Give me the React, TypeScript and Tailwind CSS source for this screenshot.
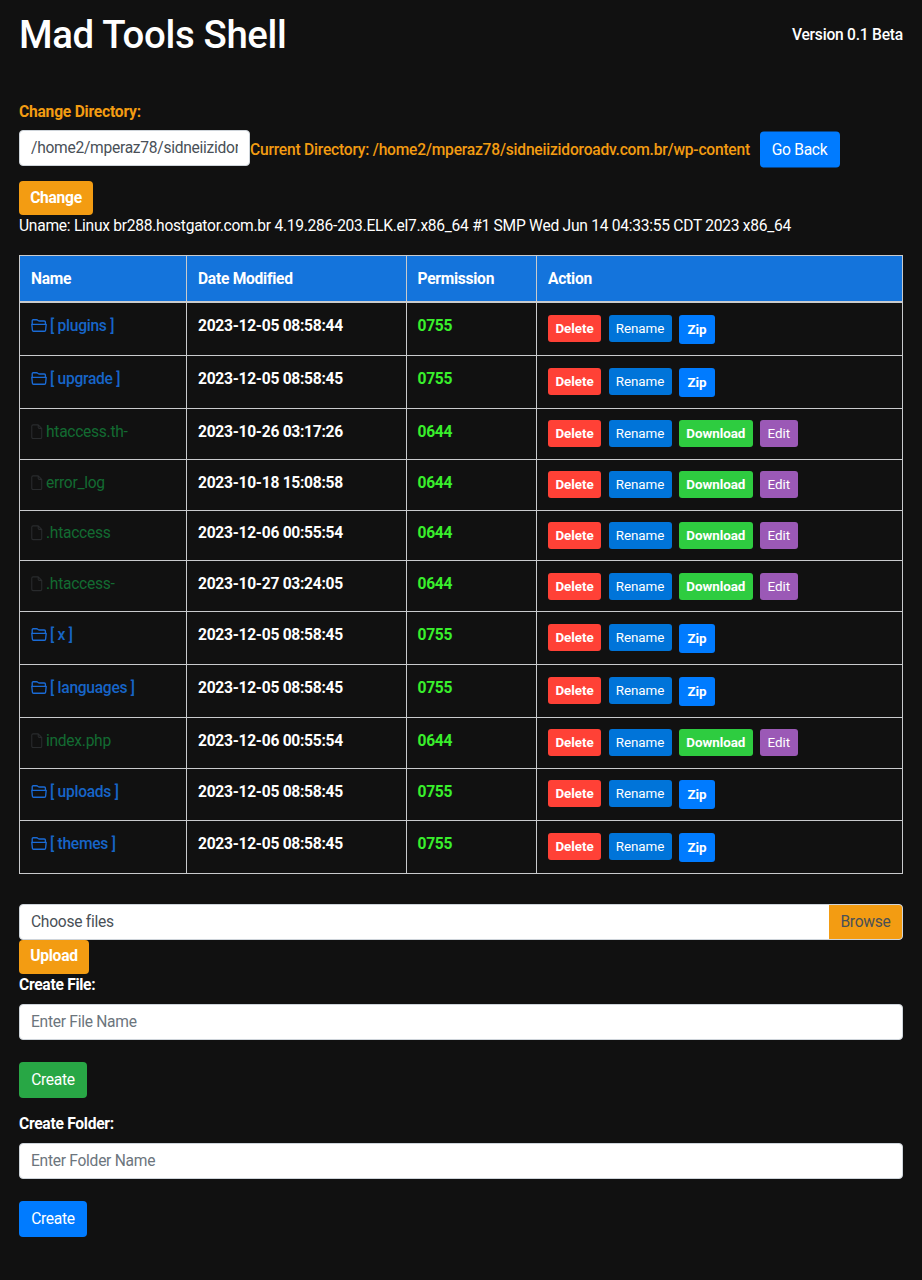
import type { ReactNode } from "react";

type Entry = { name: string; date: string; dir?: boolean };

const entries: Entry[] = [
  { name: "plugins", date: "2023-12-05 08:58:44", dir: true },
  { name: "upgrade", date: "2023-12-05 08:58:45", dir: true },
  { name: "htaccess.th-", date: "2023-10-26 03:17:26" },
  { name: "error_log", date: "2023-10-18 15:08:58" },
  { name: ".htaccess", date: "2023-12-06 00:55:54" },
  { name: ".htaccess-", date: "2023-10-27 03:24:05" },
  { name: "x", date: "2023-12-05 08:58:45", dir: true },
  { name: "languages", date: "2023-12-05 08:58:45", dir: true },
  { name: "index.php", date: "2023-12-06 00:55:54" },
  { name: "uploads", date: "2023-12-05 08:58:45", dir: true },
  { name: "themes", date: "2023-12-05 08:58:45", dir: true },
];

const columns = "grid grid-cols-[167px_219.5px_130.5px_1fr]";
const cell = "border-r border-[#c9cbcd] pl-[11px]";
const field =
  "block h-9 w-full rounded border border-[#ced4da] bg-white px-[11px] pt-px text-[#495057] placeholder:text-[#6c757d] placeholder:opacity-100";

function FolderIcon() {
  return (
    <svg viewBox="0 0 16 14" className="mt-[3px] -ml-[0.5px] mr-[3.5px] h-[15px] w-[16px] text-[#1a6bd6]" fill="none" stroke="currentColor" strokeWidth="1.35" strokeLinejoin="round">
      <path d="M1.2 5.8V2.2Q1.2 1.2 2.2 1.2H5.6Q6.2 1.2 6.8 1.8L7.4 2.2Q7.8 2.5 8.4 2.5H13.3Q14.4 2.5 14.4 3.5V5.8" />
      <path d="M.8 5.8H15.2L14.6 11.7Q14.5 12.7 13.5 12.7H2.5Q1.5 12.7 1.4 11.7Z" />
    </svg>
  );
}

function FileIcon() {
  return (
    <svg viewBox="0 0 12 16" className="mt-[3px] mr-[3.5px] h-[15.5px] w-[11.5px] text-[#292b2d]" fill="none" stroke="currentColor" strokeWidth="1.1" strokeLinejoin="round">
      <path d="M7.5.8H2.2Q.8.8.8 2.2V13.8Q.8 15.2 2.2 15.2H9.8Q11.2 15.2 11.2 13.8V4.5ZM7.5.8V3.2Q7.5 4.5 8.8 4.5H11.2" />
    </svg>
  );
}

function SmallButton({ className, children }: { className: string; children: ReactNode }) {
  return (
    <button className={`flex items-center justify-center rounded-[3px] text-[13.4px] tracking-[-0.05px] text-white ${className}`}>
      {children}
    </button>
  );
}

function Row({ entry }: { entry: Entry }) {
  return (
    <div className={`${columns} border-b border-[#c9cbcd] ${entry.dir ? "h-[52.75px]" : "h-[50.85px]"}`}>
      <div className={`${cell} flex items-start pt-[11.9px] leading-[23px]`}>
        {entry.dir ? (
          <span className="flex font-medium text-[#1765c8]">
            <FolderIcon />[ {entry.name} ]
          </span>
        ) : (
          <span className="flex text-[#136b31]">
            <FileIcon />
            {entry.name}
          </span>
        )}
      </div>
      <div className={`${cell} pt-[11.9px] font-bold leading-[23px]`}>{entry.date}</div>
      <div className={`${cell} pt-[11.9px] font-bold leading-[23px] text-[#39f02c]`}>{entry.dir ? "0755" : "0644"}</div>
      <div className={`${cell} flex items-start gap-[7.5px] pt-[11.6px]`}>
        <SmallButton className="h-[27px] w-[53px] bg-[#ff4136] font-bold">Delete</SmallButton>
        <SmallButton className="h-[27px] w-[63px] bg-[#0074d9]">Rename</SmallButton>
        {entry.dir ? (
          <SmallButton className="h-[29px] w-9 bg-[#007bff] font-bold">Zip</SmallButton>
        ) : (
          <>
            <SmallButton className="h-[27px] w-[73.5px] bg-[#2ecc40] font-bold">Download</SmallButton>
            <SmallButton className="h-[27px] w-[37.5px] bg-[#9b59b6]">Edit</SmallButton>
          </>
        )}
      </div>
    </div>
  );
}

export default function App() {
  return (
    <main className="min-h-[1280px] bg-[#111] px-[19px] font-[Roboto,sans-serif] text-[15.6px] leading-[23px] tracking-[-0.28px] text-white">
      <header className="flex h-[70px] items-center justify-between">
        <h1 className="-translate-y-px text-[38.4px] font-medium tracking-[-0.35px]">Mad Tools Shell</h1>
        <span className="pt-px font-medium tracking-[-0.23px]">Version 0.1 Beta</span>
      </header>

      <section className="pt-[30.5px]">
        <label className="block font-bold tracking-[-0.22px] text-[#f39c12]">Change Directory:</label>
        <div className="flex pt-[6px]">
          <div className="w-[231px] shrink-0">
            <input className={field} defaultValue="/home2/mperaz78/sidneiizidoroadv.com.br/wp-content" />
          </div>
          <div className="flex h-9 translate-y-[1.5px] items-center">
            <span className="w-[509.5px] whitespace-nowrap pt-px font-medium tracking-[-0.22px] text-[#f39c12]">
              Current Directory: /home2/mperaz78/sidneiizidoroadv.com.br/wp-content
            </span>
            <button className="h-9 w-20 rounded bg-[#007bff] pt-px">Go Back</button>
          </div>
        </div>
        <button className="mt-[15px] block h-[34px] w-[74px] rounded bg-[#f39c12] pt-px font-bold">Change</button>
        <p className="pt-[0.5px] tracking-[-0.27px]">
          Uname: Linux br288.hostgator.com.br 4.19.286-203.ELK.el7.x86_64 #1 SMP Wed Jun 14 04:33:55 CDT 2023 x86_64
        </p>
      </section>

      <section className="mt-[17.4px] border-t border-l border-[#c9cbcd]">
        <div className={`${columns} h-[47px] border-b-2 border-[#c9cbcd] bg-[#1474dc] font-bold`}>
          <div className={`${cell} pt-[12px]`}>Name</div>
          <div className={`${cell} pt-[12px]`}>Date Modified</div>
          <div className={`${cell} pt-[12px]`}>Permission</div>
          <div className={`${cell} pt-[12px]`}>Action</div>
        </div>
        {entries.map((entry) => (
          <Row key={entry.name} entry={entry} />
        ))}
      </section>

      <section className="pt-[30px]">
        <div className="flex h-9 items-center justify-between overflow-hidden rounded border border-[#ced4da] bg-white pl-[11px] text-[#495057]">
          <span>Choose files</span>
          <span className="flex h-full w-[73px] items-center justify-center bg-[#f39c12]">Browse</span>
        </div>
        <button className="-mt-[0.5px] block h-[34px] w-[70px] rounded bg-[#f39c12] font-bold">Upload</button>
      </section>

      <section>
        <label className="block font-bold">Create File:</label>
        <input className={`${field} mt-[7px]`} placeholder="Enter File Name" />
        <button className="mt-[22px] block h-9 w-[68px] rounded bg-[#28a745] pt-px">Create</button>
      </section>

      <section className="pt-[15px]">
        <label className="block font-bold">Create Folder:</label>
        <input className={`${field} mt-[7px]`} placeholder="Enter Folder Name" />
        <button className="mt-[22px] block h-9 w-[68px] rounded bg-[#007bff] pt-px">Create</button>
      </section>
    </main>
  );
}
